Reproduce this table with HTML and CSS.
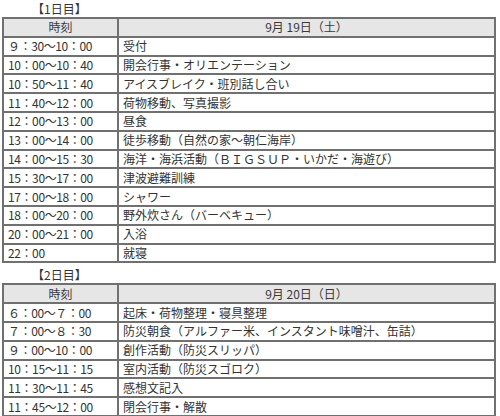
FILE: index.html
```html
<!DOCTYPE html>
<html lang="ja">
<head>
<meta charset="utf-8">
<link rel="stylesheet" href="styles.css">
</head>
<body>
<div class="day">
  <div class="label"><span class="label-text">【1日目】</span></div>
  <table class="sched">
    <tr class="head"><th class="time">時刻</th><th>9月 19日（土）</th></tr>
    <tr><td class="time">９：30～10：00</td><td>受付</td></tr>
    <tr><td class="time">10：00～10：40</td><td>開会行事・オリエンテーション</td></tr>
    <tr><td class="time">10：50～11：40</td><td>アイスブレイク・班別話し合い</td></tr>
    <tr><td class="time">11：40～12：00</td><td>荷物移動、写真撮影</td></tr>
    <tr><td class="time">12：00～13：00</td><td>昼食</td></tr>
    <tr><td class="time">13：00～14：00</td><td>徒歩移動（自然の家～朝仁海岸）</td></tr>
    <tr><td class="time">14：00～15：30</td><td>海洋・海浜活動（ＢＩＧＳＵＰ・いかだ・海遊び）</td></tr>
    <tr><td class="time">15：30～17：00</td><td>津波避難訓練</td></tr>
    <tr><td class="time">17：00～18：00</td><td>シャワー</td></tr>
    <tr><td class="time">18：00～20：00</td><td>野外炊さん（バーベキュー）</td></tr>
    <tr><td class="time">20：00～21：00</td><td>入浴</td></tr>
    <tr><td class="time">22：00</td><td>就寝</td></tr>
  </table>
</div>
<div class="day second">
  <div class="label"><span class="label-text">【2日目】</span></div>
  <table class="sched">
    <tr class="head"><th class="time">時刻</th><th>9月 20日（日）</th></tr>
    <tr><td class="time">６：00～７：00</td><td>起床・荷物整理・寝具整理</td></tr>
    <tr><td class="time">７：00～８：30</td><td>防災朝食（アルファー米、インスタント味噌汁、缶詰）</td></tr>
    <tr><td class="time">９：00～10：00</td><td>創作活動（防災スリッパ）</td></tr>
    <tr><td class="time">10：15～11：15</td><td>室内活動（防災スゴロク）</td></tr>
    <tr><td class="time">11：30～11：45</td><td>感想文記入</td></tr>
    <tr><td class="time">11：45～12：00</td><td>閉会行事・解散</td></tr>
  </table>
</div>
</body>
</html>
```

FILE: styles.css
```css
html, body {
  margin: 0;
  padding: 0;
  background: #ffffff;
}
body {
  font-family: "Noto Sans CJK JP", "Noto Sans", sans-serif;
  font-size: 12px;
  color: #333333;
  padding: 1px 0 0 2px;
}
.label {
  display: flex;
  height: 16px;
  line-height: 16px;
  padding-left: 30px;
  color: #333333;
}
.second {
  margin-top: 4px;
}
.sched {
  border-collapse: collapse;
  width: 494px;
  table-layout: fixed;
}
.sched th, .sched td {
  border: 2px solid #707070;
  height: 16.8px;
  padding: 0 4px;
  line-height: 16px;
  text-align: left;
  font-weight: normal;
  white-space: nowrap;
  overflow: hidden;
}
.sched td.time {
  letter-spacing: -0.4px;
}
.sched .time {
  width: 105px;
}
.sched .head th {
  background: #e6e6e6;
  text-align: center;
  color: #3a3a3a;
}
```
